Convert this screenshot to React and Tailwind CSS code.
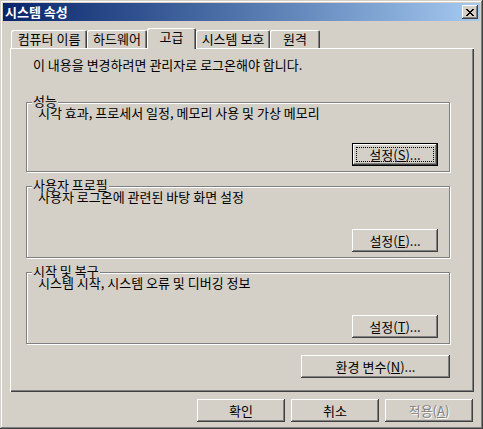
import React from 'react';

const raised =
  'shadow-[inset_-1px_-1px_0_#404040,inset_1px_1px_0_#ffffff,inset_-2px_-2px_0_#808080]';

const Btn = ({ children, className = '', isDefault, disabled }) => (
  <button
    type="button"
    className={
      'relative h-[23px] flex items-center justify-center bg-[#d4d0c8] text-[13px] leading-[14px] ' +
      (isDefault ? 'border border-black ' : '') +
      raised +
      ' ' +
      (disabled ? 'text-[#808080] [text-shadow:1px_1px_0_#ffffff] ' : 'text-black ') +
      className
    }
  >
    {isDefault && <span className="absolute inset-[3px] border border-dotted border-black" />}
    <span className="relative">{children}</span>
  </button>
);

const GroupBox = ({ label, text, button, className = '' }) => (
  <div
    className={
      'relative w-[424px] flex flex-col border border-[#808080] shadow-[inset_1px_1px_0_#ffffff,1px_1px_0_#ffffff] ' +
      className
    }
  >
    <span className="absolute left-[5px] top-[-8px] px-[1px] bg-[#d4d0c8] leading-[12px]">{label}</span>
    <p className="relative pl-[11px] pt-[3px] leading-[14px]">{text}</p>
    <div className="mt-auto flex justify-end pr-[11px] pb-[5px]">{button}</div>
  </div>
);

const CloseX = () => {
  const px = [
    [0, 0], [1, 0], [6, 0], [7, 0],
    [1, 1], [2, 1], [5, 1], [6, 1],
    [2, 2], [3, 2], [4, 2], [5, 2],
    [3, 3], [4, 3],
    [2, 4], [3, 4], [4, 4], [5, 4],
    [1, 5], [2, 5], [5, 5], [6, 5],
    [0, 6], [1, 6], [6, 6], [7, 6],
  ];
  return (
    <svg width="8" height="7" viewBox="0 0 8 7" shapeRendering="crispEdges">
      {px.map(([x, y]) => (
        <rect key={x + '-' + y} x={x} y={y} width="1" height="1" fill="#000" />
      ))}
    </svg>
  );
};

const tabs = [
  { name: '컴퓨터 이름', w: 'w-[76px]' },
  { name: '하드웨어', w: 'w-[60px]' },
  { name: '고급', w: 'w-[49px]', active: true },
  { name: '시스템 보호', w: 'w-[74px]' },
  { name: '원격', w: 'w-[50px]' },
];

export default function App() {
  return (
    <div className="w-[483px] h-[429px] p-[3px] flex flex-col bg-[#d4d0c8] text-black text-[13px] font-['Noto_Sans_CJK_KR',sans-serif] shadow-[inset_-1px_-1px_0_#404040,inset_1px_1px_0_#d4d0c8,inset_-2px_-2px_0_#808080,inset_2px_2px_0_#ffffff]">
      {/* title bar */}
      <div className="h-[18px] flex items-center justify-between pl-[2px] pr-[2px] bg-gradient-to-r from-[#0a246a] to-[#a6caf0]">
        <span className="text-white font-bold leading-[14px]">시스템 속성</span>
        <div className={'w-[16px] h-[14px] flex items-center justify-center bg-[#d4d0c8] ' + raised}>
          <CloseX />
        </div>
      </div>

      <div className="pl-[7px] flex flex-col">
        {/* tabs */}
        <div className="mt-[7px] h-[20px] flex items-end pl-[1px]">
          {tabs.map((t) => (
            <div
              key={t.name}
              className={
                t.w +
                ' flex justify-center bg-[#d4d0c8] rounded-t-[2px] shadow-[inset_1px_1px_0_#ffffff,inset_-1px_0_0_#404040,inset_-2px_0_0_#808080] ' +
                (t.active
                  ? 'relative z-10 h-[21px] mb-[-1px] pt-[2px]'
                  : 'h-[18px] pt-[2px]')
              }
            >
              <span className="leading-[14px]">{t.name}</span>
            </div>
          ))}
        </div>

        {/* panel */}
        <div className="w-[464px] h-[344px] pl-[16px] pt-[10px] flex flex-col shadow-[inset_1px_1px_0_#ffffff,inset_-1px_-1px_0_#404040,inset_-2px_-2px_0_#808080]">
          <p className="pl-[7px] leading-[14px]">이 내용을 변경하려면 관리자로 로그온해야 합니다.</p>

          <GroupBox
            className="mt-[30px] h-[70px]"
            label="성능"
            text="시각 효과, 프로세서 일정, 메모리 사용 및 가상 메모리"
            button={
              <Btn isDefault className="w-[86px]">
                설정(<u>S</u>)...
              </Btn>
            }
          />
          <GroupBox
            className="mt-[14px] h-[72px]"
            label="사용자 프로필"
            text="사용자 로그온에 관련된 바탕 화면 설정"
            button={
              <Btn className="w-[86px]">
                설정(<u>E</u>)...
              </Btn>
            }
          />
          <GroupBox
            className="mt-[14px] h-[72px]"
            label="시작 및 복구"
            text="시스템 시작, 시스템 오류 및 디버깅 정보"
            button={
              <Btn className="w-[86px]">
                설정(<u>T</u>)...
              </Btn>
            }
          />

          <div className="mt-[11px] w-[424px] flex justify-end">
            <Btn className="w-[149px]">
              환경 변수(<u>N</u>)...
            </Btn>
          </div>
        </div>

        {/* dialog buttons */}
        <div className="mt-[7px] w-[463px] flex justify-end gap-[6px]">
          <Btn className="w-[88px]">확인</Btn>
          <Btn className="w-[88px]">취소</Btn>
          <Btn disabled className="w-[88px]">
            적용(<u>A</u>)
          </Btn>
        </div>
      </div>
    </div>
  );
}
